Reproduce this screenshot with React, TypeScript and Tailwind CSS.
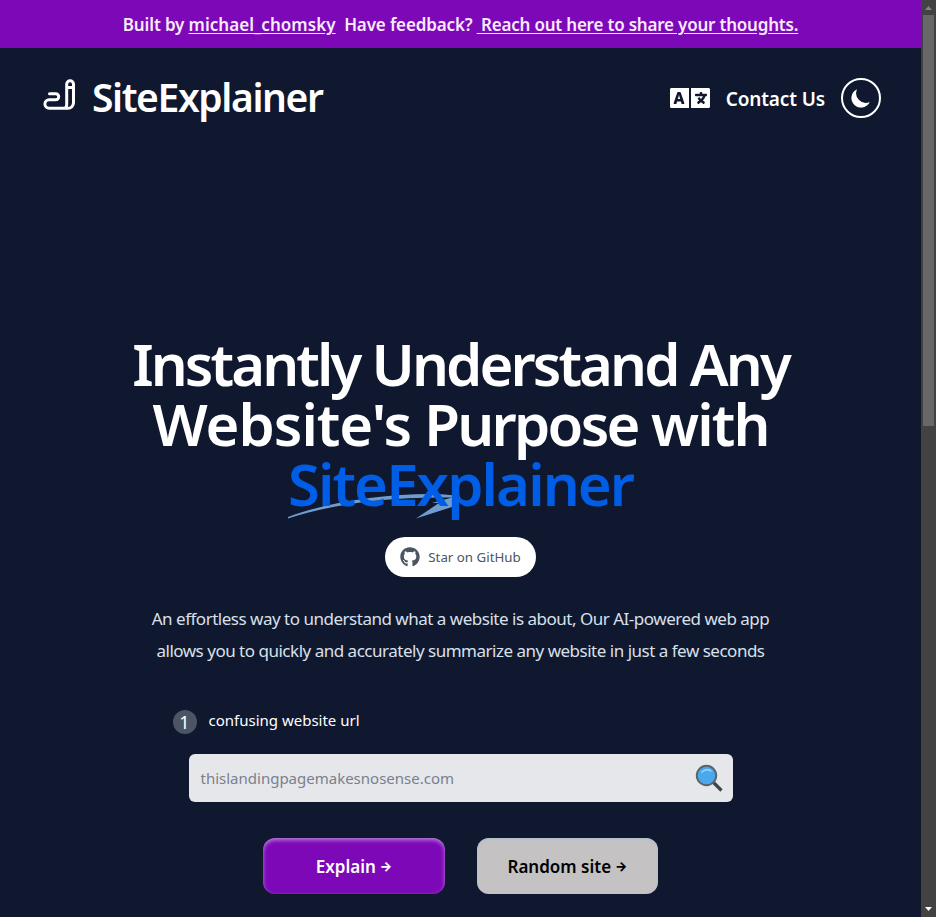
import React from "react";
import { FaLanguage, FaGithub } from "react-icons/fa";

function Arrow() {
  return <span className="relative -top-0.5 ml-1 inline-block font-['Inter',sans-serif] text-[13px] font-extrabold leading-none">→</span>;
}

export default function App() {
  return (
    <div className="flex h-[917px] w-[936px] overflow-hidden bg-[#0f182f] font-['Noto_Sans',sans-serif] text-white">
      <div className="flex min-w-0 flex-1 flex-col">
        <div className="flex h-12 items-center justify-center whitespace-pre bg-[#7c08b8] pt-0.5 text-[17px] font-semibold tracking-[-0.14px] text-[#f8eafc]">
          <span>Built by </span>
          <a className="tracking-[0.05px] underline underline-offset-2">michael_chomsky</a>
          <span>{"  Have feedback? "}</span>
          <a className="tracking-[-0.2px] underline underline-offset-2">{" Reach out here to share your thoughts."}</a>
        </div>
        <header className="flex h-[100px] items-center justify-between px-10">
          <div className="flex items-center gap-3">
            <svg className="size-10" viewBox="0 0 40 40" fill="none" stroke="currentColor" strokeWidth="3" strokeLinejoin="round" strokeLinecap="round">
              <path d="M9.5 15.7h6.2a3 3 0 0 1 0 6H9.2a4.3 4.3 0 0 0 0 8.6H28a5.5 5.5 0 0 0 5.5-5.5V6.2a3.4 3.4 0 0 0-6.8 0v20.5a3.5 3.5 0 0 1-1.4 3M27 9.5h6" />
            </svg>
            <span className="pb-1 text-[39px] font-semibold leading-none tracking-[-1.4px]">SiteExplainer</span>
          </div>
          <nav className="flex items-center gap-4">
            <FaLanguage className="h-8 w-10" />
            <a className="pt-0.5 text-[19px] font-semibold tracking-[-0.12px]">Contact Us</a>
            <button className="flex size-10 items-center justify-center rounded-full border-2 border-white">
              <svg className="size-6" viewBox="0 0 20 20" fill="currentColor">
                <path d="M17.293 13.293A8 8 0 016.707 2.707a8.001 8.001 0 1010.586 10.586z" />
              </svg>
            </button>
          </nav>
        </header>
        <main className="flex flex-col items-center pt-[186px]">
          <h1 className="flex flex-col items-center whitespace-nowrap text-[58px] font-semibold leading-[60px]">
            <span className="tracking-[-2.9px]">Instantly Understand Any</span>
            <span className="tracking-[-1.9px]">
              <span className="tracking-[-1px]">Website&apos;s</span> <span className="tracking-[-2.7px]">Purpose</span> with
            </span>
            <span className="relative tracking-[-1.9px] text-[#005de5]">
              <svg className="absolute left-0 top-[39px] h-[26px] w-[170px]" viewBox="0 0 170 26" fill="#6f9dd0">
                <path d="M0 24C42 8 104 0 150 1L168 2.5 167 13 128 25.5 151 10 144 10 164 4.5C104 3.5 48 10 0 25.5Z" />
              </svg>
              <span className="relative">SiteExplainer</span>
            </span>
          </h1>
          <a className="mt-[23px] flex h-10 w-[151px] items-center justify-center gap-2 rounded-full bg-white text-[13.3px] text-[#4b5563]">
            <FaGithub className="size-5" />
            <span className="pt-0.5">Star on GitHub</span>
          </a>
          <p className="mt-[26px] whitespace-nowrap text-center text-[17px] leading-8 tracking-[-0.49px] text-[#d9e0ea]">
            <span className="block">An effortless way to understand what a website is about, Our AI-powered web app</span>
            <span className="block">allows you to quickly and accurately summarize any website in just a few seconds</span>
          </p>
          <div className="mt-[43px] flex h-6 w-[576px] items-center gap-3">
            <span className="flex size-6 items-center justify-center rounded-full bg-[#4b5563] text-[18px]">1</span>
            <span className="pb-[3px] text-[15px]">confusing website url</span>
          </div>
          <div className="mt-5 flex h-12 w-[544px] items-center justify-between rounded-md bg-[#e5e7eb] pl-3 pr-2.5">
            <span className="text-[15px] text-[#7a808c]">thislandingpagemakesnosense.com</span>
            <svg className="size-7" viewBox="0 0 28 28">
              <path d="M18 18l8.5 8.5" stroke="#404648" strokeWidth="3.2" />
              <circle cx="11.5" cy="11.5" r="9.7" fill="#4aa9ed" stroke="#58656b" strokeWidth="2" />
              <path d="M7 8q4-4 9-1" fill="none" stroke="#a6dcfa" strokeWidth="1.4" strokeLinecap="round" />
            </svg>
          </div>
          <div className="mt-9 flex gap-8 text-[17px] font-semibold">
            <button className="h-14 w-[182px] rounded-xl bg-[#7c08b8] pt-0.5 shadow-[inset_0_2px_4px_#ffffff80]">Explain<Arrow /></button>
            <button className="h-14 w-[181px] rounded-xl bg-[#c5c2c4] pt-0.5 text-black shadow-[inset_0_1px_3px_#a8c0d4]">Random site<Arrow /></button>
          </div>
        </main>
      </div>
      <div className="flex w-[15px] flex-col items-center bg-[#424242]">
        <svg className="h-[15px] w-[15px]" viewBox="0 0 15 15"><path d="M4 10l3.5-4 3.5 4z" fill="#868686" /></svg>
        <div className="h-[411px] w-[11px] bg-[#686868]" />
        <div className="flex-1" />
        <svg className="h-[15px] w-[15px]" viewBox="0 0 15 15"><path d="M4 5l3.5 4L11 5z" fill="#fff" /></svg>
      </div>
    </div>
  );
}
